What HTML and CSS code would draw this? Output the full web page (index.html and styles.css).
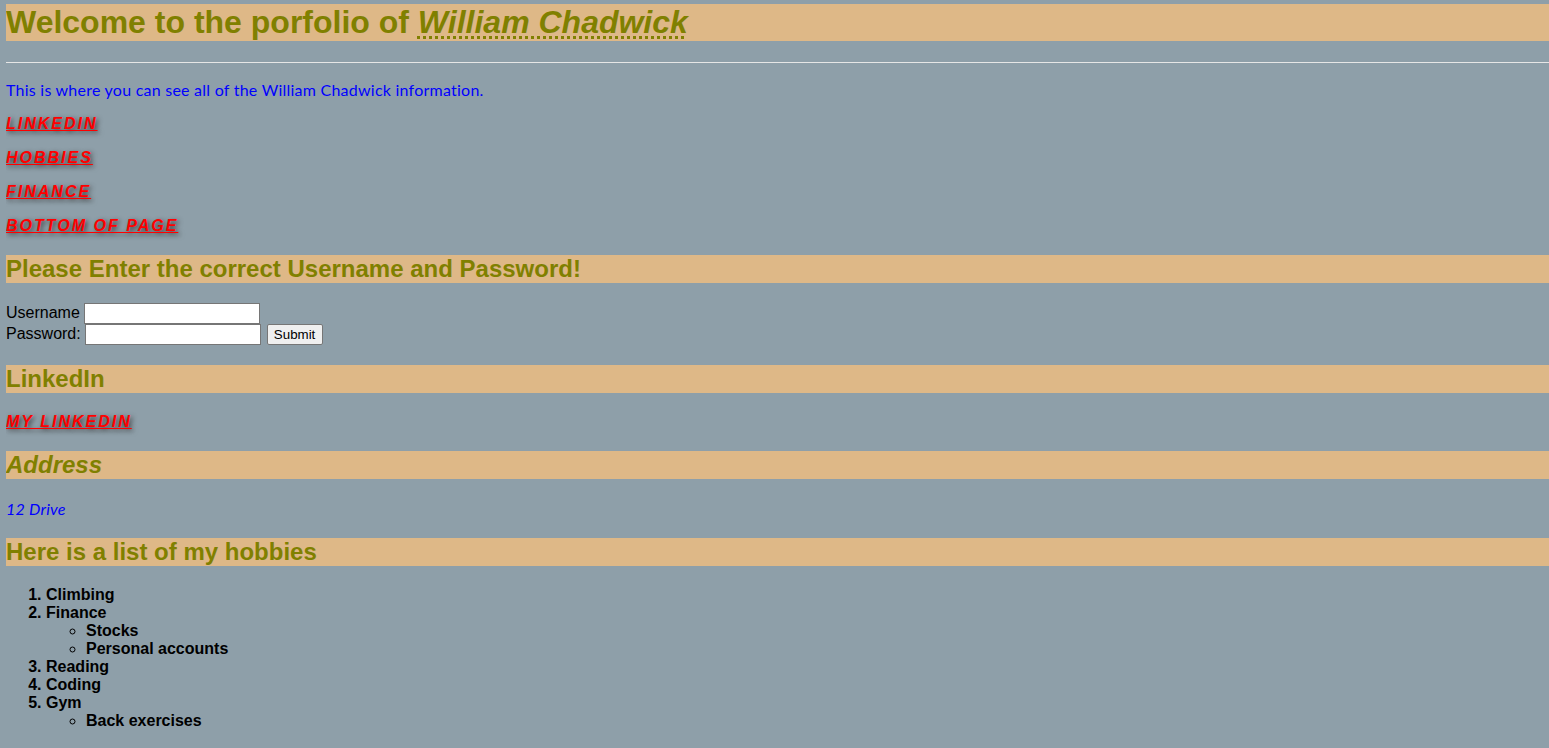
FILE: index.html
```html
<!DOCTYPE html>
<html lang="en">
<head>
<meta charset="utf-8">
<title>William Chadwick</title>
<link rel="stylesheet" href="styles.css">
</head>
<body>
<h1 class="banner">Welcome to the porfolio of <abbr class="name" title="William Chadwick">William Chadwick</abbr></h1>
<hr class="rule">
<p class="info">This is where you can see all of the William Chadwick information.</p>
<p class="nav"><a href="#linkedin" class="red-link">LinkedIn</a></p>
<p class="nav"><a href="#hobbies" class="red-link">Hobbies</a></p>
<p class="nav"><a href="#finance" class="red-link">Finance</a></p>
<p class="nav"><a href="#bottom" class="red-link">Bottom of page</a></p>

<h2 class="banner">Please Enter the correct Username and Password!</h2>
<form class="login">
  Username <input type="text" class="field"><br>
  Password: <input type="password" class="field"> <input type="submit" value="Submit" class="submit">
</form>

<h2 class="banner" id="linkedin">LinkedIn</h2>
<p class="nav"><a href="#" class="red-link">My LinkedIn</a></p>

<h2 class="banner italic">Address</h2>
<p class="info address">12 Drive</p>

<h2 class="banner" id="hobbies">Here is a list of my hobbies</h2>
<ol class="hobbies">
  <li>Climbing</li>
  <li id="finance">Finance
    <ul class="sub">
      <li>Stocks</li>
      <li>Personal accounts</li>
    </ul>
  </li>
  <li>Reading</li>
  <li>Coding</li>
  <li>Gym
    <ul class="sub">
      <li>Back exercises</li>
    </ul>
  </li>
</ol>
<p id="bottom"></p>
</body>
</html>
```
FILE: styles.css
```css
html {
  background: #8e9fa9;
}
body {
  margin: 4px 0 0 6px;
  background: #8e9fa9;
  font-family: "Liberation Sans", Arial, sans-serif;
  font-size: 16px;
  color: #000;
}
.banner {
  background: #deb887;
  color: #808000;
  font-family: "Liberation Sans", Arial, sans-serif;
  font-weight: bold;
}
h1.banner {
  font-size: 32px;
  margin: 0 0 21.44px 0;
}
h2.banner {
  font-size: 24px;
  margin: 19.92px 0;
}
.italic {
  font-style: italic;
}
.name {
  font-style: italic;
  text-decoration: underline dotted;
  text-decoration-thickness: 2.5px;
  text-underline-offset: 3px;
}
.rule {
  border: 0;
  border-top: 1px solid #e6e6e6;
  border-bottom: 1px solid #8e9fa9;
  height: 0;
  margin: 8px 0;
}
.info {
  color: #0000ff;
  font-family: "Trebuchet MS", "Lato", "Open Sans", sans-serif;
  font-size: 16px;
  letter-spacing: 0.24px;
  margin: 16px 0;
}
.address {
  font-style: italic;
}
.nav {
  margin: 16px 0;
}
.red-link {
  color: #ff0000;
  font-family: "Liberation Sans", Arial, sans-serif;
  font-weight: bold;
  font-style: italic;
  text-transform: uppercase;
  letter-spacing: 2px;
  text-shadow: 2px 2px 5px #333;
}
.login {
  margin: 0;
}
.field {
  box-sizing: border-box;
  width: 176px;
  height: 21px;
  border: 1px solid #767676;
  padding: 1px 2px;
  background: #fff;
  font-family: "Liberation Sans", Arial, sans-serif;
  font-size: 13.33px;
}
.submit {
  box-sizing: border-box;
  height: 21px;
  width: 56px;
  margin-left: 1px;
  padding: 1px 6px;
  border: 1px solid #767676;
  border-radius: 2px;
  background: #efefef;
  font-family: "Liberation Sans", Arial, sans-serif;
  font-size: 13.33px;
  color: #000;
}
.hobbies {
  font-weight: bold;
  margin: 16px 0;
  padding-left: 40px;
}
.sub {
  list-style-type: circle;
  margin: 0;
  padding-left: 40px;
}
```
